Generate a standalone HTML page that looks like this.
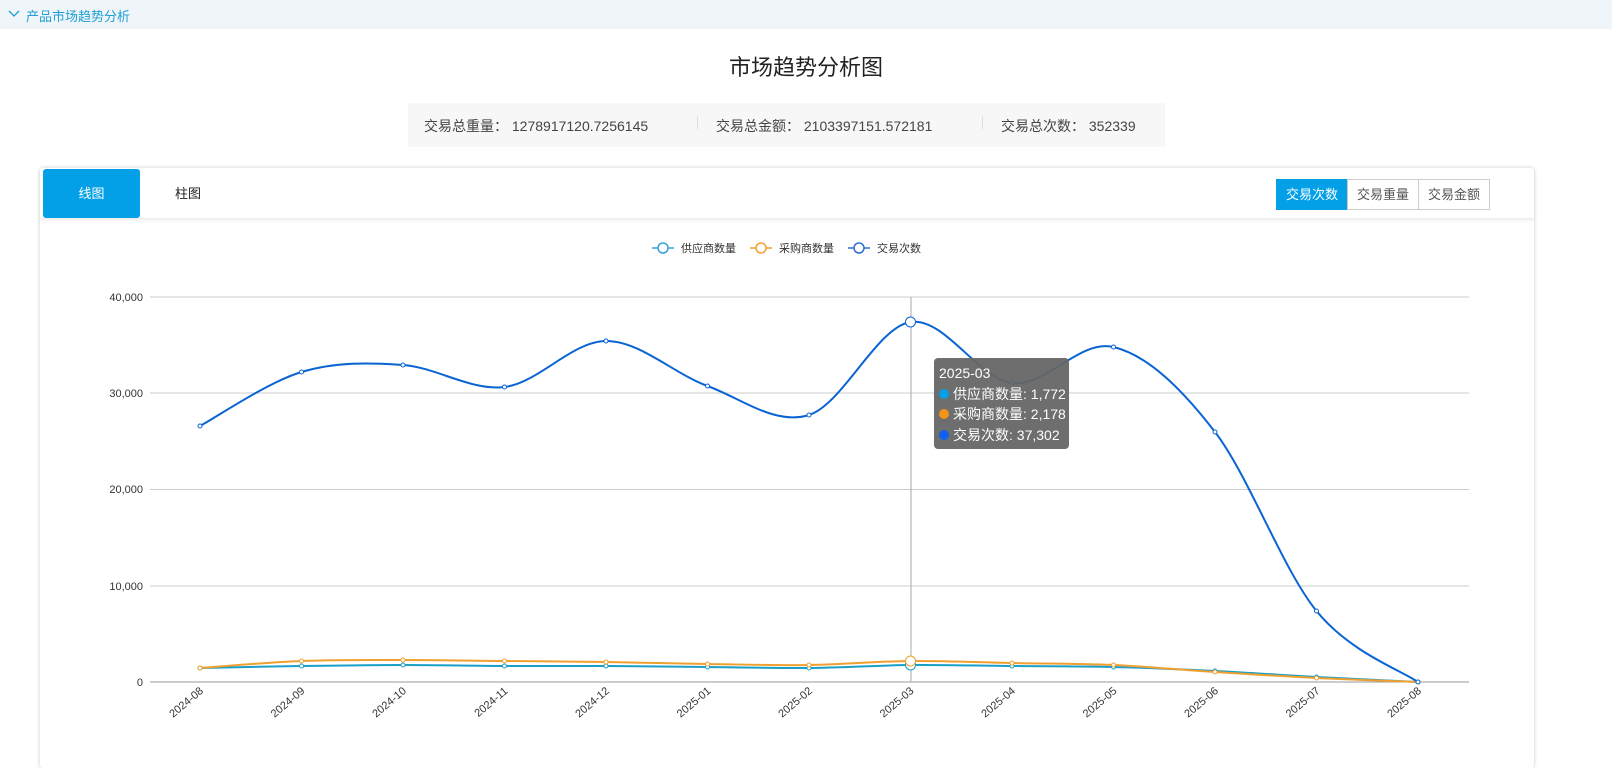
<!DOCTYPE html>
<html><head><meta charset="utf-8">
<style>
body{margin:0;width:1612px;height:749px;overflow:hidden;background:#fff;font-family:"Liberation Sans","Noto Sans CJK SC",sans-serif;}
.top{position:absolute;left:0;top:0;width:1612px;height:29px;background:#eff5f9;color:#1e9fd8;font-size:13px;}
.top span{position:absolute;left:26px;top:6px;}
.title{position:absolute;left:0;width:1612px;top:50px;text-align:center;font-size:22px;color:#222;}
.stats{position:absolute;left:408px;top:103px;width:757px;height:44px;background:#f7f7f7;font-size:14px;color:#444;}
.stats div{position:absolute;top:13px;}
.sep{position:absolute;top:16px;width:1px;height:13px;background:#ddd;}
.card{position:absolute;left:40px;top:168px;width:1494px;height:600px;background:#fff;box-shadow:0 0 4px rgba(0,0,0,.2);border-radius:3px;}
.hdr{position:absolute;left:0;top:0;width:1494px;height:50px;border-bottom:1px solid #eee;box-shadow:0 2px 3px rgba(0,0,0,.06);}
.tab1{position:absolute;left:3px;top:1px;width:97px;height:49px;background:#03a0e8;color:#fff;font-size:13px;text-align:center;line-height:49px;border-radius:3px;}
.tab2{position:absolute;left:135px;top:1px;font-size:13px;line-height:49px;color:#222;}
.seg{position:absolute;top:11px;left:1237px;display:flex;font-size:13px;}
.seg div{height:29px;line-height:29px;border:1px solid #ccc;padding:0 9px;color:#555;margin-left:-1px;}
.seg .on{background:#03a0e8;border-color:#03a0e8;color:#fff;}
</style></head><body>
<div class="top"><svg style="position:absolute;left:8px;top:10px" width="12" height="8"><path d="M1 1L6 6L11 1" stroke="#1e9fd8" fill="none" stroke-width="1.3"/></svg><span>产品市场趋势分析</span></div>
<div class="title">市场趋势分析图</div>
<div class="stats">
<div style="left:16px">交易总重量：&nbsp;1278917120.7256145</div>
<div class="sep" style="left:289px"></div>
<div style="left:308px">交易总金额：&nbsp;2103397151.572181</div>
<div class="sep" style="left:574px"></div>
<div style="left:593px">交易总次数：&nbsp;352339</div>
</div>
<div class="card">
<div class="hdr"><div class="tab1">线图</div><div class="tab2">柱图</div>
<div class="seg"><div class="on">交易次数</div><div>交易重量</div><div>交易金额</div></div></div>
</div>
<svg id="ch" style="position:absolute;left:0;top:0" width="1612" height="749" font-family="Liberation Sans,Noto Sans CJK SC,sans-serif">
<g font-size="11" fill="#333">
<line x1="652" y1="248" x2="674" y2="248" stroke="#3aa0dc" stroke-width="1.5"/><circle cx="663" cy="248" r="5" fill="#fff" stroke="#3aa0dc" stroke-width="1.5"/><text x="681" y="252">供应商数量</text>
<line x1="750" y1="248" x2="772" y2="248" stroke="#f0a030" stroke-width="1.5"/><circle cx="761" cy="248" r="5" fill="#fff" stroke="#f0a030" stroke-width="1.5"/><text x="779" y="252">采购商数量</text>
<line x1="848" y1="248" x2="870" y2="248" stroke="#2f6fd0" stroke-width="1.5"/><circle cx="859" cy="248" r="5" fill="#fff" stroke="#2f6fd0" stroke-width="1.5"/><text x="877" y="252">交易次数</text>
</g>
<g stroke="#ccc" stroke-width="1">
<line x1="150" y1="297" x2="1469" y2="297"/><line x1="150" y1="393" x2="1469" y2="393"/><line x1="150" y1="489.5" x2="1469" y2="489.5"/><line x1="150" y1="586" x2="1469" y2="586"/><line x1="150" y1="682" x2="1469" y2="682" stroke="#999"/>
<line x1="911" y1="297" x2="911" y2="682" stroke="#aaa"/>
</g>
<g font-size="11" fill="#333" text-anchor="end">
<text x="143" y="301">40,000</text><text x="143" y="397">30,000</text><text x="143" y="493">20,000</text><text x="143" y="590">10,000</text><text x="143" y="686">0</text>
</g>
<g id="xl" font-size="11" fill="#333" text-anchor="end"></g>
<g id="lines"></g>
<rect x="934" y="358" width="135" height="91" rx="4" fill="#666" fill-opacity="0.95"/>
<g font-size="14" fill="#fff"><text x="939" y="378">2025-03</text>
<circle cx="944" cy="394" r="5" fill="#03a0e8"/><text x="953" y="399">供应商数量: 1,772</text>
<circle cx="944" cy="414" r="5" fill="#f39218"/><text x="953" y="419">采购商数量: 2,178</text>
<circle cx="944" cy="435" r="5" fill="#0e60f0"/><text x="953" y="440">交易次数: 37,302</text></g>
</svg>
<script>
var xs=[],labels=["2024-08","2024-09","2024-10","2024-11","2024-12","2025-01","2025-02","2025-03","2025-04","2025-05","2025-06","2025-07","2025-08"];
for(var i=0;i<13;i++)xs.push(200+i*101.5);
var t=[426,372,365,387,341,386,415,322,383,347,432,611,682];
var s=[668,666,665,666,666,667,668,665,666,667,671,677,682];
var b=[668,661,660,661,662,664,665,661,663,665,672,678,682];
function path(y){var d="M"+xs[0]+" "+y[0];for(var i=0;i<12;i++){var p0=i?i-1:i,p3=i<11?i+2:i+1;
var c1x=xs[i]+(xs[i+1]-xs[p0])/6,c1y=y[i]+(y[i+1]-y[p0])/6,c2x=xs[i+1]-(xs[p3]-xs[i])/6,c2y=y[i+1]-(y[p3]-y[i])/6;
d+=" C"+c1x+" "+c1y+" "+c2x+" "+c2y+" "+xs[i+1]+" "+y[i+1];}return d;}
var h="";
[[s,"#1aa0c8"],[b,"#f0a030"],[t,"#0a64d2"]].forEach(function(a){h+='<path d="'+path(a[0])+'" fill="none" stroke="'+a[1]+'" stroke-width="2"/>';
for(var i=0;i<13;i++){var r=i==7?5:2;h+='<circle cx="'+xs[i]+'" cy="'+a[0][i]+'" r="'+r+'" fill="#fff" stroke="'+a[1]+'" stroke-width="1"/>';}});
document.getElementById("lines").innerHTML=h;
var g="";for(var i=0;i<13;i++)g+='<text transform="translate('+(xs[i]+4)+',692) rotate(-40)">'+labels[i]+'</text>';
document.getElementById("xl").innerHTML=g;
</script>
</body></html>
